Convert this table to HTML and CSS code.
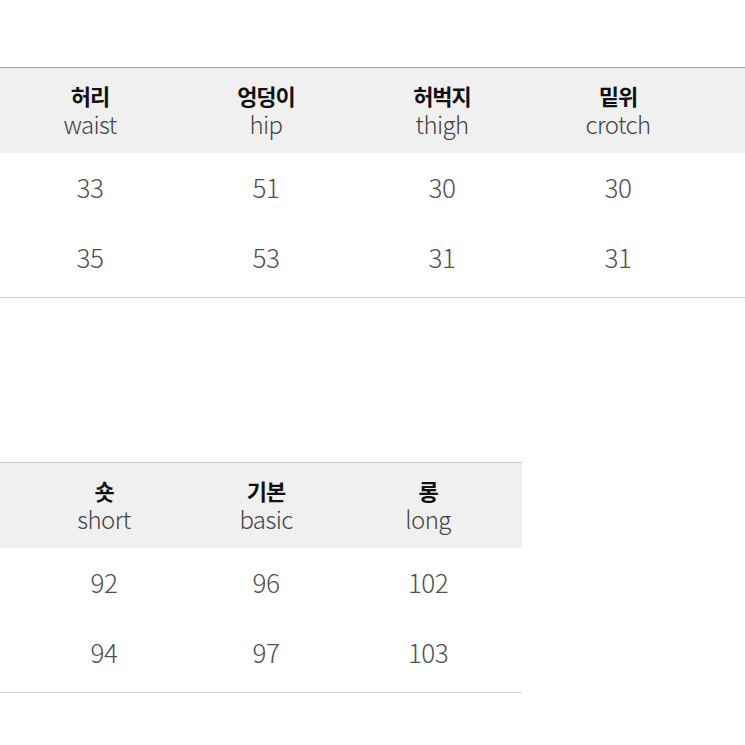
FILE: index.html
```html
<!DOCTYPE html>
<html lang="ko">
<head>
<meta charset="utf-8">
<link rel="stylesheet" href="styles.css">
</head>
<body>
<div class="page">
  <section class="table t1">
    <div class="head row">
      <div class="cell"><span class="ko">허리</span><span class="en">waist</span></div>
      <div class="cell"><span class="ko">엉덩이</span><span class="en">hip</span></div>
      <div class="cell"><span class="ko">허벅지</span><span class="en">thigh</span></div>
      <div class="cell"><span class="ko">밑위</span><span class="en">crotch</span></div>
    </div>
    <div class="body">
      <div class="row data"><div class="cell">33</div><div class="cell">51</div><div class="cell">30</div><div class="cell">30</div></div>
      <div class="row data"><div class="cell">35</div><div class="cell">53</div><div class="cell">31</div><div class="cell">31</div></div>
    </div>
  </section>
  <section class="table t2">
    <div class="head row">
      <div class="cell"><span class="ko">숏</span><span class="en">short</span></div>
      <div class="cell"><span class="ko">기본</span><span class="en">basic</span></div>
      <div class="cell"><span class="ko">롱</span><span class="en">long</span></div>
    </div>
    <div class="body">
      <div class="row data"><div class="cell">92</div><div class="cell">96</div><div class="cell">102</div></div>
      <div class="row data"><div class="cell">94</div><div class="cell">97</div><div class="cell">103</div></div>
    </div>
  </section>
</div>
</body>
</html>
```
FILE: styles.css
```css
html, body {
  margin: 0;
  padding: 0;
  background: #ffffff;
}
body {
  font-family: "Noto Sans CJK KR", "Noto Sans", sans-serif;
}
.page {
  padding-top: 67px;
  display: flex;
  flex-direction: column;
  gap: 164px;
}
.table {
  border-top: 1px solid #a4a4a4;
  border-bottom: 1px solid #d2d2d2;
  padding-bottom: 4px;
}
.t1 { width: 745px; }
.t2 { width: 522px; border-top-color: #cccccc; }
.row {
  display: grid;
}
.t1 .row {
  grid-template-columns: repeat(4, 176px);
  padding-left: 2px;
}
.t2 .row {
  grid-template-columns: repeat(3, 162px);
  padding-left: 23px;
}
.head {
  background: #f0f0f0;
  height: 85px;
  box-sizing: border-box;
  padding-bottom: 3px;
}
.cell {
  display: flex;
  flex-direction: column;
  align-items: center;
  justify-content: center;
  text-align: center;
}
.ko {
  font-size: 22px;
  font-weight: 700;
  color: #111111;
  line-height: 28px;
  letter-spacing: -1px;
}
.en {
  font-size: 24px;
  font-weight: 300;
  color: #434343;
  line-height: 29px;
  letter-spacing: -0.6px;
}
.data {
  height: 70px;
  box-sizing: border-box;
  padding-bottom: 4px;
}
.data .cell {
  font-size: 26px;
  font-weight: 300;
  color: #505050;
  letter-spacing: -0.5px;
}
```
